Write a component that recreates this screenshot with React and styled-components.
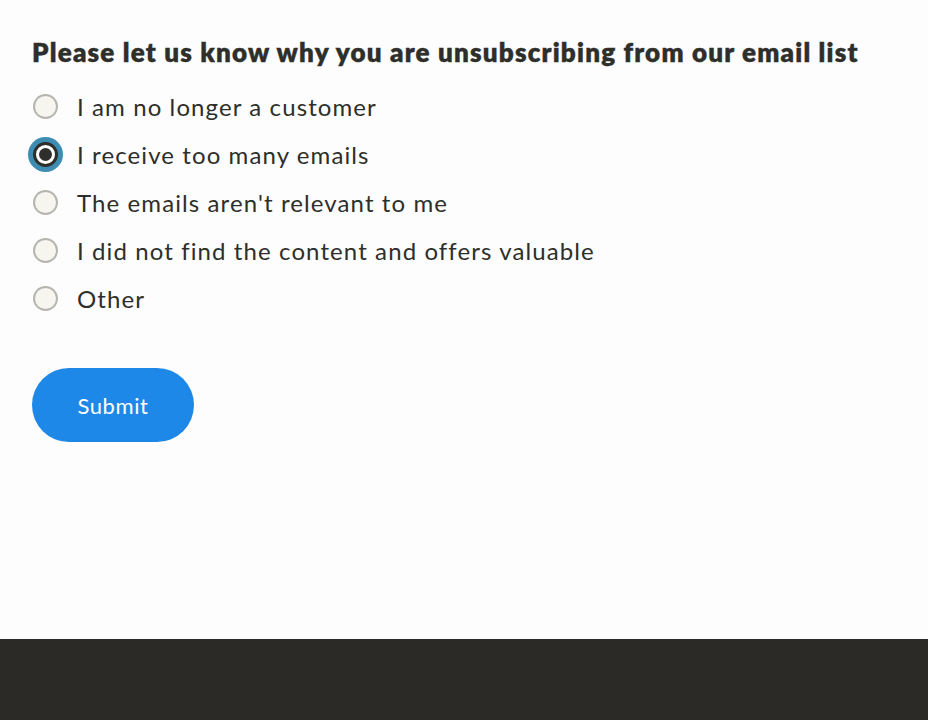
import React, { useState } from "react";
import styled, { createGlobalStyle } from "styled-components";

const GlobalStyle = createGlobalStyle`
  html, body {
    margin: 0;
    padding: 0;
    background: #fdfdfd;
  }
  * { box-sizing: border-box; }
`;

const Page = styled.div`
  height: 720px;
  display: flex;
  flex-direction: column;
  font-family: Lato, "Noto Sans", sans-serif;
  color: #2e2e2a;
`;

const Main = styled.form`
  flex: 1;
  padding: 34px 32px 0 32px;
`;

const Heading = styled.h1`
  margin: 0 0 12px 0;
  font-size: 26px;
  font-weight: 800;
  letter-spacing: 1.2px;
  line-height: 36px;
  -webkit-text-stroke: 0.4px #2e2e2a;
`;

const Options = styled.div`
  display: flex;
  flex-direction: column;
`;

const Option = styled.label`
  display: flex;
  align-items: center;
  height: 48px;
  gap: 19px;
  font-size: 24px;
  letter-spacing: 1.1px;
  cursor: pointer;
`;

const Radio = styled.span`
  width: 25px;
  height: 25px;
  margin-left: 1px;
  border-radius: 50%;
  flex-shrink: 0;
  border: ${(p) => (p.checked ? "3px solid #2e2e2a" : "2px solid #b4b4b0")};
  background: ${(p) => (p.checked ? "#fff" : "#f6f6ee")};
  box-shadow: ${(p) => (p.checked ? "0 0 0 5px #3d8db3" : "none")};
  display: flex;
  align-items: center;
  justify-content: center;

  &::after {
    content: "";
    width: 13px;
    height: 13px;
    border-radius: 50%;
    background: #2e2e2a;
    display: ${(p) => (p.checked ? "block" : "none")};
  }
`;

const SubmitButton = styled.button`
  margin-top: 46px;
  width: 162px;
  height: 74px;
  border: none;
  border-radius: 37px;
  background: #1e88e8;
  color: #fff;
  font-family: Lato, "Noto Sans", sans-serif;
  font-size: 22px;
  letter-spacing: 0.6px;
  cursor: pointer;
`;

const Footer = styled.footer`
  height: 81px;
  background: #2b2a27;
`;

const reasons = [
  "I am no longer a customer",
  "I receive too many emails",
  "The emails aren't relevant to me",
  "I did not find the content and offers valuable",
  "Other",
];

export default function App() {
  const [selected, setSelected] = useState(1);

  return (
    <>
      <GlobalStyle />
      <Page>
        <Main onSubmit={(e) => e.preventDefault()}>
          <Heading>Please let us know why you are unsubscribing from our email list</Heading>
          <Options>
            {reasons.map((r, i) => (
              <Option key={r} onClick={() => setSelected(i)}>
                <Radio checked={selected === i} />
                {r}
              </Option>
            ))}
          </Options>
          <SubmitButton type="submit">Submit</SubmitButton>
        </Main>
        <Footer />
      </Page>
    </>
  );
}
